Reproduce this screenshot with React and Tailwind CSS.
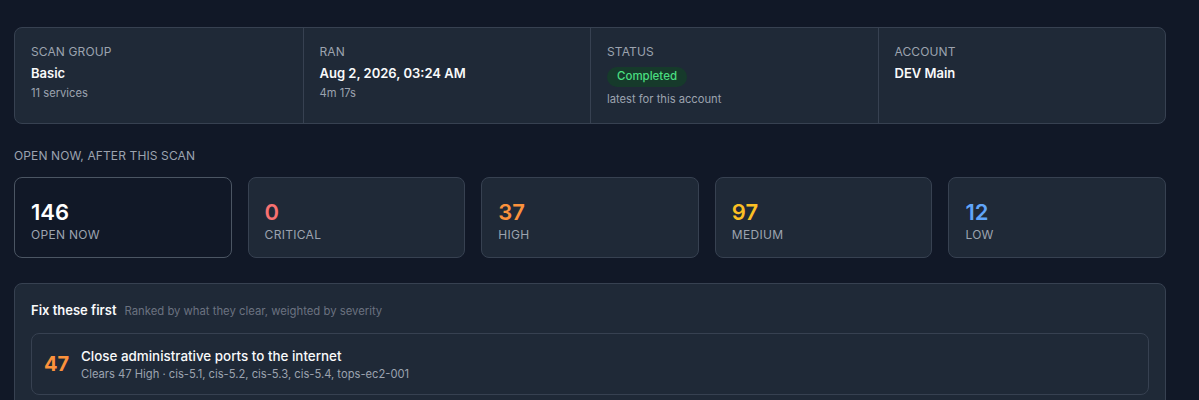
export default function App() {
  const meta = [
    { label: "SCAN GROUP", value: "Basic", sub: "11 services" },
    { label: "RAN", value: "Aug 2, 2026, 03:24 AM", sub: "4m 17s" },
    { label: "STATUS", badge: "Completed", sub: "latest for this account" },
    { label: "ACCOUNT", value: "DEV Main" },
  ];
  const stats = [
    { n: "146", label: "OPEN NOW", color: "text-white", active: true },
    { n: "0", label: "CRITICAL", color: "text-[#f87171]" },
    { n: "37", label: "HIGH", color: "text-[#fb923c]" },
    { n: "97", label: "MEDIUM", color: "text-[#fbbf24]" },
    { n: "12", label: "LOW", color: "text-[#60a5fa]" },
  ];
  return (
    <div
      className="min-h-[400px] bg-[#111827] px-[14px] pt-[27px] pb-6 text-white"
      style={{ fontFamily: "Inter, 'Noto Sans', sans-serif" }}
    >
      <div className="w-[1152px]">
        <div className="grid grid-cols-4 rounded-lg border border-[#374151] bg-[#1f2937]">
          {meta.map((m, i) => (
            <div
              key={m.label}
              className={`h-[95px] px-4 pt-4 ${i > 0 ? "border-l border-[#374151]" : ""}`}
            >
              <div className="text-[12px] leading-4 tracking-[0.01em] text-[#9ca3af]">{m.label}</div>
              {m.value && (
                <div className="mt-[3px] text-[13px] font-semibold leading-5 text-[#f9fafb]">{m.value}</div>
              )}
              {m.badge && (
                <div className="mt-[7px] flex">
                  <span className="inline-flex h-5 items-center rounded-full bg-[#163a2b] px-[10px] text-[11.5px] font-medium text-[#4ade80]">
                    {m.badge}
                  </span>
                </div>
              )}
              {m.sub && (
                <div className={`${m.badge ? "mt-[4px]" : "mt-[2px]"} text-[11.2px] leading-4 text-[#9ca3af]`}>
                  {m.sub}
                </div>
              )}
            </div>
          ))}
        </div>

        <div className="mt-[24px] text-[12px] leading-4 tracking-[0.01em] text-[#9ca3af]">
          OPEN NOW, AFTER THIS SCAN
        </div>
        <div className="mt-[13px] grid grid-cols-5 gap-4">
          {stats.map((s) => (
            <div
              key={s.label}
              className={`h-[81px] rounded-lg border px-4 pt-[20px] ${
                s.active ? "border-[#4b5563] bg-[#111827]" : "border-[#374151] bg-[#1f2937]"
              }`}
            >
              <div className={`text-[22px] font-semibold leading-7 ${s.color}`}>{s.n}</div>
              <div className="mt-[1px] text-[12px] leading-4 tracking-wide text-[#9ca3af]">{s.label}</div>
            </div>
          ))}
        </div>

        <div className="mt-[25px] rounded-lg border border-[#374151] bg-[#1f2937] px-4 pt-[17px] pb-4">
          <div className="flex items-baseline gap-2">
            <span className="text-[13px] font-semibold text-[#f9fafb]">Fix these first</span>
            <span className="text-[11.3px] text-[#6b7280]">Ranked by what they clear, weighted by severity</span>
          </div>
          <div className="mt-[12px] flex h-[62px] items-center gap-3 rounded-lg border border-[#374151] bg-[#1f2937] px-3">
            <div className="w-[25px] text-[20px] font-bold text-[#fb923c]">47</div>
            <div>
              <div className="text-[13.4px] font-medium leading-5 text-[#f9fafb]">
                Close administrative ports to the internet
              </div>
              <div className="text-[11.2px] leading-4 text-[#9ca3af]">
                Clears 47 High · cis-5.1, cis-5.2, cis-5.3, cis-5.4, tops-ec2-001
              </div>
            </div>
          </div>
        </div>
      </div>
    </div>
  );
}
